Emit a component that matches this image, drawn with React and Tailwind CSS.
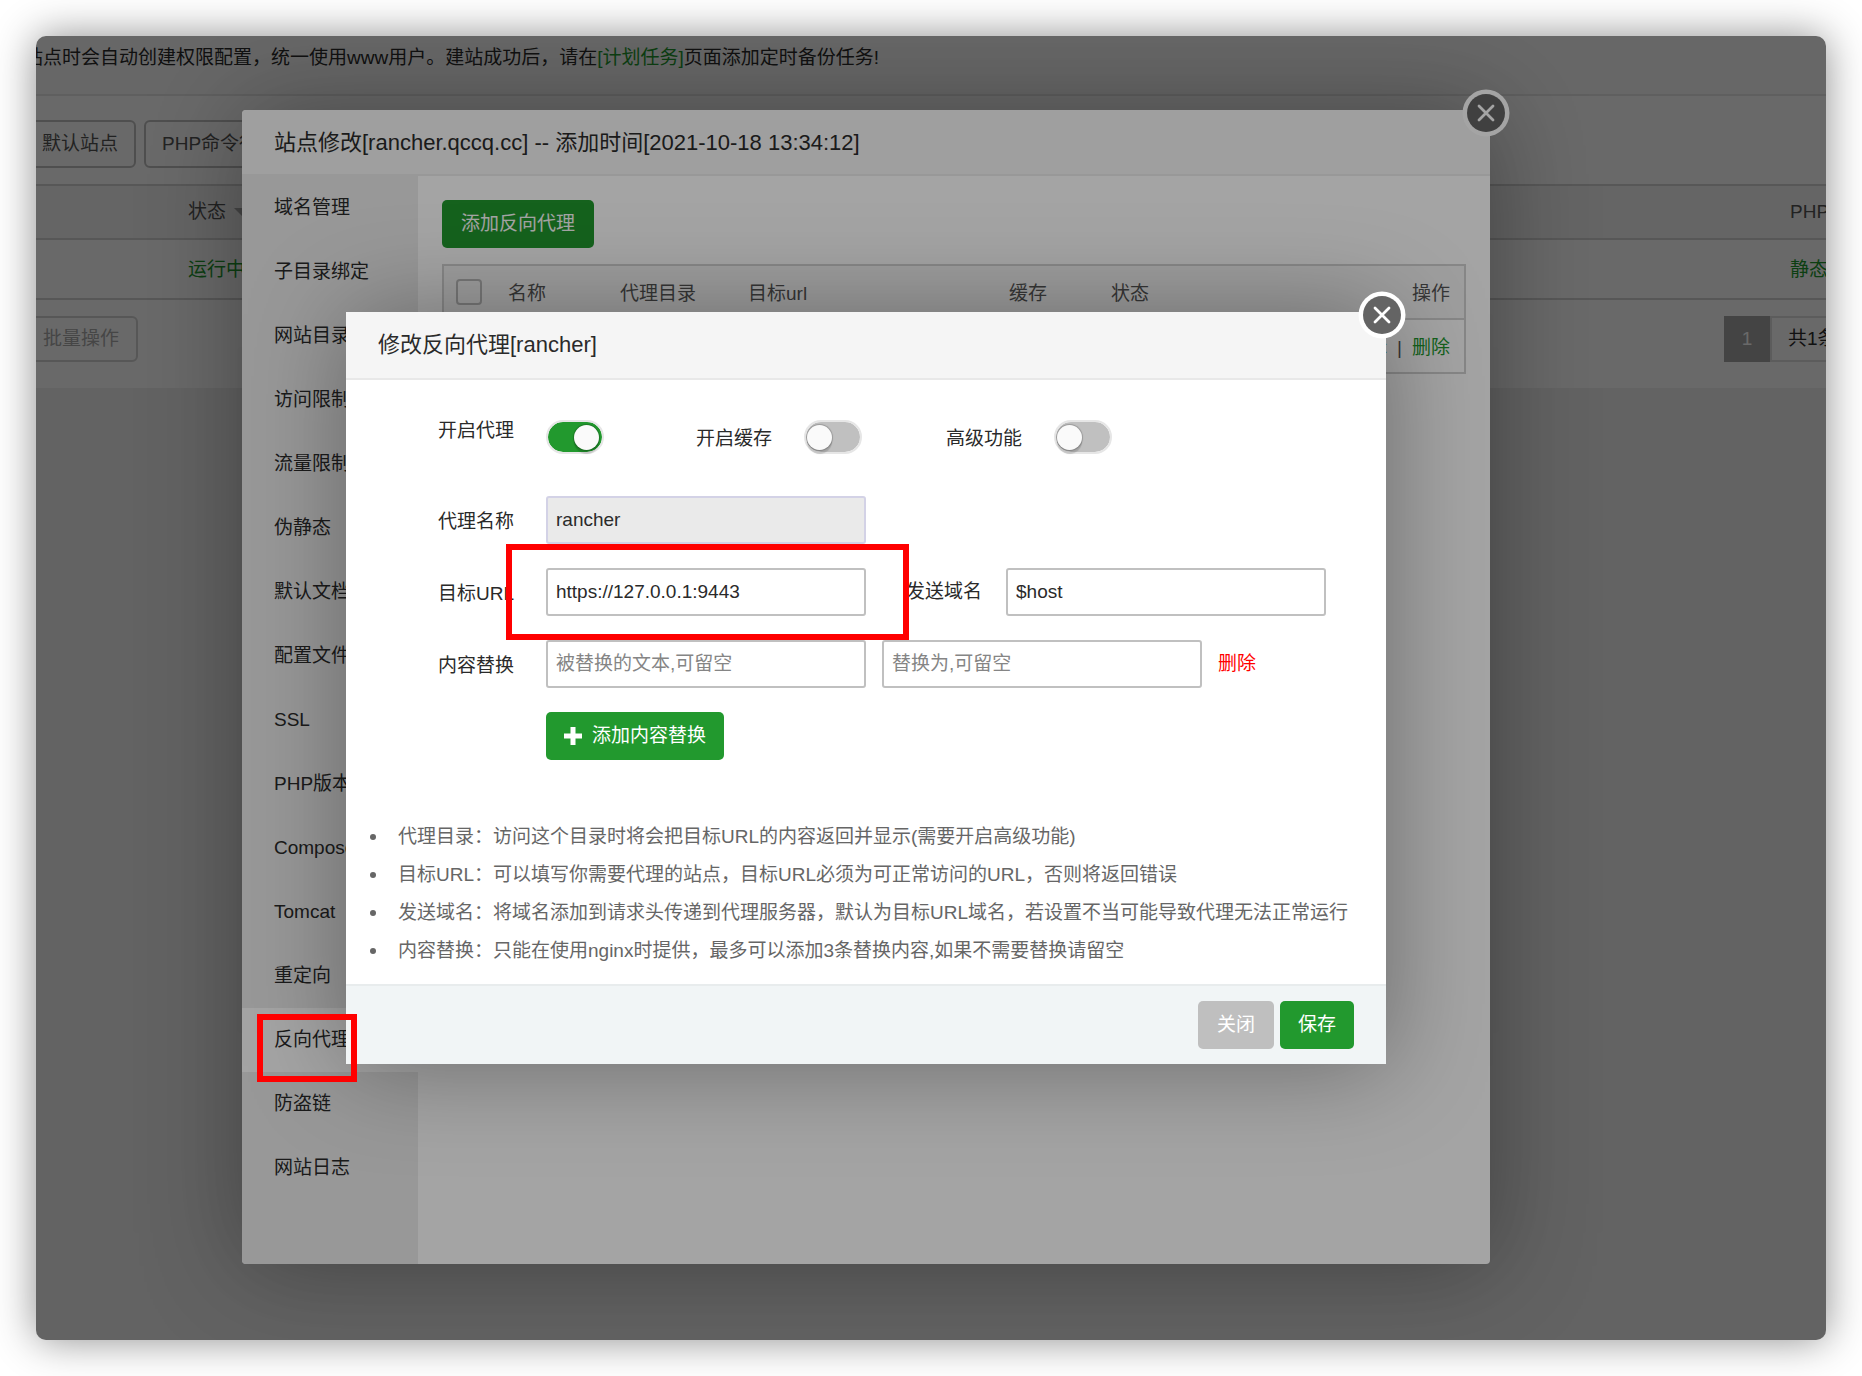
import { useState } from 'react';

const menu = ['域名管理', '子目录绑定', '网站目录', '访问限制', '流量限制', '伪静态', '默认文档', '配置文件', 'SSL', 'PHP版本', 'Composer', 'Tomcat', '重定向', '反向代理', '防盗链', '网站日志'];

const tips = [
  '代理目录：访问这个目录时将会把目标URL的内容返回并显示(需要开启高级功能)',
  '目标URL：可以填写你需要代理的站点，目标URL必须为可正常访问的URL，否则将返回错误',
  '发送域名：将域名添加到请求头传递到代理服务器，默认为目标URL域名，若设置不当可能导致代理无法正常运行',
  '内容替换：只能在使用nginx时提供，最多可以添加3条替换内容,如果不需要替换请留空',
];

const inputClass = 'w-80 h-12 shrink-0 border-2 border-[#c0c0c0] rounded-[3px] bg-white px-2 placeholder:text-[#858585] outline-none';
const labelClass = 'w-[200px] shrink-0 pt-[5px] pr-8 text-right';

function CloseButton() {
  return (
    <button aria-label="关闭窗口" className="absolute -top-[21px] -right-5 size-12">
      <svg viewBox="0 0 48 48" className="size-12">
        <circle cx="24" cy="24" r="23.5" fill="#fff" />
        <circle cx="24" cy="24" r="19" fill="#646464" />
        <path d="M17 17 L31 31 M31 17 L17 31" stroke="#fff" strokeWidth="2.8" strokeLinecap="round" />
      </svg>
    </button>
  );
}

function Toggle({ id, checked, onChange }) {
  return (
    <input
      id={id}
      type="checkbox"
      checked={checked}
      onChange={onChange}
      className="appearance-none shrink-0 w-[58px] h-[34px] rounded-full border-2 border-[#e6e6e6] bg-[#c0c0c0] bg-clip-padding pt-[3px] checked:bg-[#22992e] before:block before:size-[25px] before:rounded-full before:bg-[#fafafa] before:shadow-[0_0_1px_1px_rgba(0,0,0,0.2),0_4px_1px_rgba(0,0,0,0.14)] before:content-[''] before:translate-x-[1px] checked:before:translate-x-[26px]"
    />
  );
}

function SitesPage() {
  return (
    <div className="bg-white overflow-hidden whitespace-nowrap">
      <p className="h-[60px] pt-[7px] leading-[30px] border-b-2 border-[#e6e6e6] bg-[#fafafa] -indent-3">
        站点时会自动创建权限配置，统一使用www用户。建站成功后，请在<a href="#cron" className="text-[#22992e]">[计划任务]</a>页面添加定时备份任务!
      </p>
      <div className="flex gap-2 pt-6 pb-4 -ml-3">
        <button className="h-12 shrink-0 px-4 border-2 border-[#c0c0c0] rounded-md text-[#555]">默认站点</button>
        <button className="h-12 shrink-0 px-4 border-2 border-[#c0c0c0] rounded-md text-[#555]">PHP命令行版本</button>
      </div>
      <table className="w-full table-fixed text-left">
        <thead>
          <tr className="h-[54px] bg-[#f5f5f5] border-y-2 border-[#d4d4d4] text-[#555]">
            <th className="w-36"></th>
            <th className="pl-2 font-normal">
              <span className="flex items-center gap-2">状态 <svg viewBox="0 0 16 8" className="w-4 h-2"><path d="M0 0H16L8 8Z" fill="#aaa" /></svg></span>
            </th>
            <th className="w-11 pl-2 font-normal">PHP</th>
          </tr>
        </thead>
        <tbody>
          <tr className="h-[60px] border-b-2 border-[#d4d4d4] text-[#22992e]">
            <td></td>
            <td className="pt-0.5 pl-2"><a href="#status">运行中</a></td>
            <td className="pt-0.5 pl-2"><a href="#php">静态</a></td>
          </tr>
        </tbody>
      </table>
      <div className="flex justify-between pt-4 pb-[26px]">
        <button className="-ml-3 h-[46px] px-[17px] border-2 border-[#d4d4d4] rounded-md text-[#aaa]">批量操作</button>
        <div className="flex w-[102px]">
          <span className="w-[46px] h-[46px] shrink-0 leading-[46px] bg-[#a6a6a6] text-white text-center">1</span>
          <span className="h-[46px] shrink-0 px-4 leading-[42px] border-2 border-[#e0e0e0]">共1条</span>
        </div>
      </div>
    </div>
  );
}

function SiteModal() {
  return (
    <section className="relative w-[1248px] rounded bg-white shadow-[2px_2px_100px_rgba(0,0,0,0.35)]">
      <h2 className="h-[66px] px-8 leading-[66px] text-[22px] rounded-t bg-[#f7f7f7] border-b-2 border-[#ececec]">站点修改[rancher.qccq.cc] -- 添加时间[2021-10-18 13:34:12]</h2>
      <CloseButton />
      <div className="flex">
        <nav className="w-44 shrink-0 pb-16 bg-[#ececed] rounded-bl">
          {menu.map(item => (
            <a key={item} href="#menu" className={`block h-16 pl-8 leading-[64px] ${item === '反向代理' ? 'bg-white' : ''}`}>{item}</a>
          ))}
        </nav>
        <div className="flex-1 p-6">
          <button className="w-[152px] h-12 rounded-[5px] bg-[#22992e] text-white">添加反向代理</button>
          <table className="mt-4 w-full table-fixed text-left border-2 border-[#d2d2d2]">
            <thead>
              <tr className="h-[54px] bg-[#f6f6f6] border-b-2 border-[#d2d2d2] text-[#555]">
                <th className="w-[49px] pl-3"><input type="checkbox" aria-label="全选" className="block appearance-none size-[26px] border-2 border-[#bbb] rounded" /></th>
                <th className="w-28 pt-1 pl-4 font-normal">名称</th>
                <th className="w-32 pt-1 pl-4 font-normal">代理目录</th>
                <th className="w-[261px] pt-1 pl-4 font-normal">目标url</th>
                <th className="w-[102px] pt-1 pl-4 font-normal">缓存</th>
                <th className="w-[110px] pt-1 pl-4 font-normal">状态</th>
                <th className="pt-1 pr-3.5 font-normal text-right">操作</th>
              </tr>
            </thead>
            <tbody>
              <tr className="h-[54px] text-[#555]">
                <td className="pl-3"><input type="checkbox" aria-label="选择rancher" className="block appearance-none size-[26px] border-2 border-[#bbb] rounded" /></td>
                <td className="pt-1 pl-4">rancher</td>
                <td className="pt-1 pl-4">/</td>
                <td className="pt-1 pl-4">https://127.0.0.1:9443</td>
                <td className="pt-1 pl-4">已关闭</td>
                <td className="pt-1 pl-4">运行中</td>
                <td className="pt-1 pr-3.5 text-right">
                  <a href="#edit" className="text-[#22992e]">编辑</a>
                  <span className="mx-2.5">|</span>
                  <a href="#del" className="text-[#22992e]">删除</a>
                </td>
              </tr>
            </tbody>
          </table>
        </div>
      </div>
    </section>
  );
}

function ProxyModal() {
  const [enabled, setEnabled] = useState(true);
  const [cache, setCache] = useState(false);
  const [advanced, setAdvanced] = useState(false);

  return (
    <section className="relative w-[1040px] rounded-sm bg-white shadow-[2px_2px_100px_rgba(0,0,0,0.35)]">
      <h2 className="h-[68px] px-8 leading-[66px] text-[22px] bg-[#f5f5f5] border-b-2 border-[#e8e8e8]">修改反向代理[rancher]</h2>
      <CloseButton />
      <form onSubmit={e => e.preventDefault()}>
        <div className="flex flex-col gap-6 pt-10">
          <div className="flex h-[52px] items-start leading-[38px]">
            <label htmlFor="enabled" className="w-[200px] pr-8 text-right leading-[22px]">开启代理</label>
            <Toggle id="enabled" checked={enabled} onChange={e => setEnabled(e.target.checked)} />
            <label htmlFor="cache" className="w-[200px] pr-8 text-right">开启缓存</label>
            <Toggle id="cache" checked={cache} onChange={e => setCache(e.target.checked)} />
            <label htmlFor="advanced" className="w-[192px] pr-8 text-right">高级功能</label>
            <Toggle id="advanced" checked={advanced} onChange={e => setAdvanced(e.target.checked)} />
          </div>
          <div className="flex items-center">
            <label htmlFor="name" className={labelClass}>代理名称</label>
            <input id="name" disabled defaultValue="rancher" className="w-80 h-12 shrink-0 border-2 border-[#d3d2e6] rounded-[3px] bg-[#eaeaea] px-2" />
          </div>
          <div className="flex items-center">
            <label htmlFor="target" className={labelClass}>目标URL</label>
            <input id="target" defaultValue="https://127.0.0.1:9443" className={inputClass} />
            <label htmlFor="host" className="w-[140px] shrink-0 pr-6 text-right">发送域名</label>
            <input id="host" defaultValue="$host" className={inputClass} />
          </div>
          <div className="flex items-center">
            <label htmlFor="from" className={labelClass}>内容替换</label>
            <input id="from" placeholder="被替换的文本,可留空" className={inputClass} />
            <input aria-label="替换为" placeholder="替换为,可留空" className={`${inputClass} ml-4`} />
            <a href="#remove" className="ml-4 text-[#f00]">删除</a>
          </div>
          <button type="button" className="ml-[200px] flex w-[178px] h-12 items-center justify-center gap-2.5 rounded-[5px] bg-[#22992e] text-white">
            <svg viewBox="0 0 18 18" className="size-[18px]"><path d="M6.5 0h5v6.5H18v5h-6.5V18h-5v-6.5H0v-5h6.5z" fill="currentColor" /></svg>
            添加内容替换
          </button>
        </div>
        <ul className="mt-[58px] pl-6 pb-3.5 leading-[38px] text-[#666]">
          {tips.map(tip => (
            <li key={tip} className="flex items-center whitespace-nowrap before:size-1.5 before:mr-[22px] before:rounded-full before:bg-[#666] before:content-['']">{tip}</li>
          ))}
        </ul>
        <div className="flex h-20 items-center justify-end gap-1.5 pr-8 bg-[#f1f5f6] border-t-2 border-[#e8eced]">
          <button type="button" className="w-[76px] h-12 rounded-[5px] bg-[#bfbfbf] text-white">关闭</button>
          <button type="submit" className="w-[74px] h-12 rounded-[5px] bg-[#22992e] text-white">保存</button>
        </div>
      </form>
    </section>
  );
}

export default function App() {
  return (
    <main className="min-h-screen p-9 bg-white text-[19px] text-[#2a2a2a] font-['Liberation_Sans','Noto_Sans_CJK_SC',sans-serif]">
      <div className="relative min-h-[calc(100vh-72px)] overflow-hidden rounded-[10px] bg-[#f0f0f0] shadow-[0_0_42px_rgba(0,0,0,0.45)]">
        <SitesPage />
        <div className="absolute inset-0 pt-[74px] pl-[206px] bg-black/[0.355]">
          <SiteModal />
        </div>
        <div className="absolute inset-0 pt-[276px] pl-[310px] bg-black/[0.355]">
          <ProxyModal />
        </div>
        {/* red marks around the target url and the active menu item */}
        <div className="absolute top-[508px] left-[470px] w-[403px] h-24 border-6 border-[#f00] pointer-events-none" />
        <div className="absolute top-[978px] left-[221px] w-[100px] h-[68px] border-6 border-[#f00] pointer-events-none" />
      </div>
    </main>
  );
}
